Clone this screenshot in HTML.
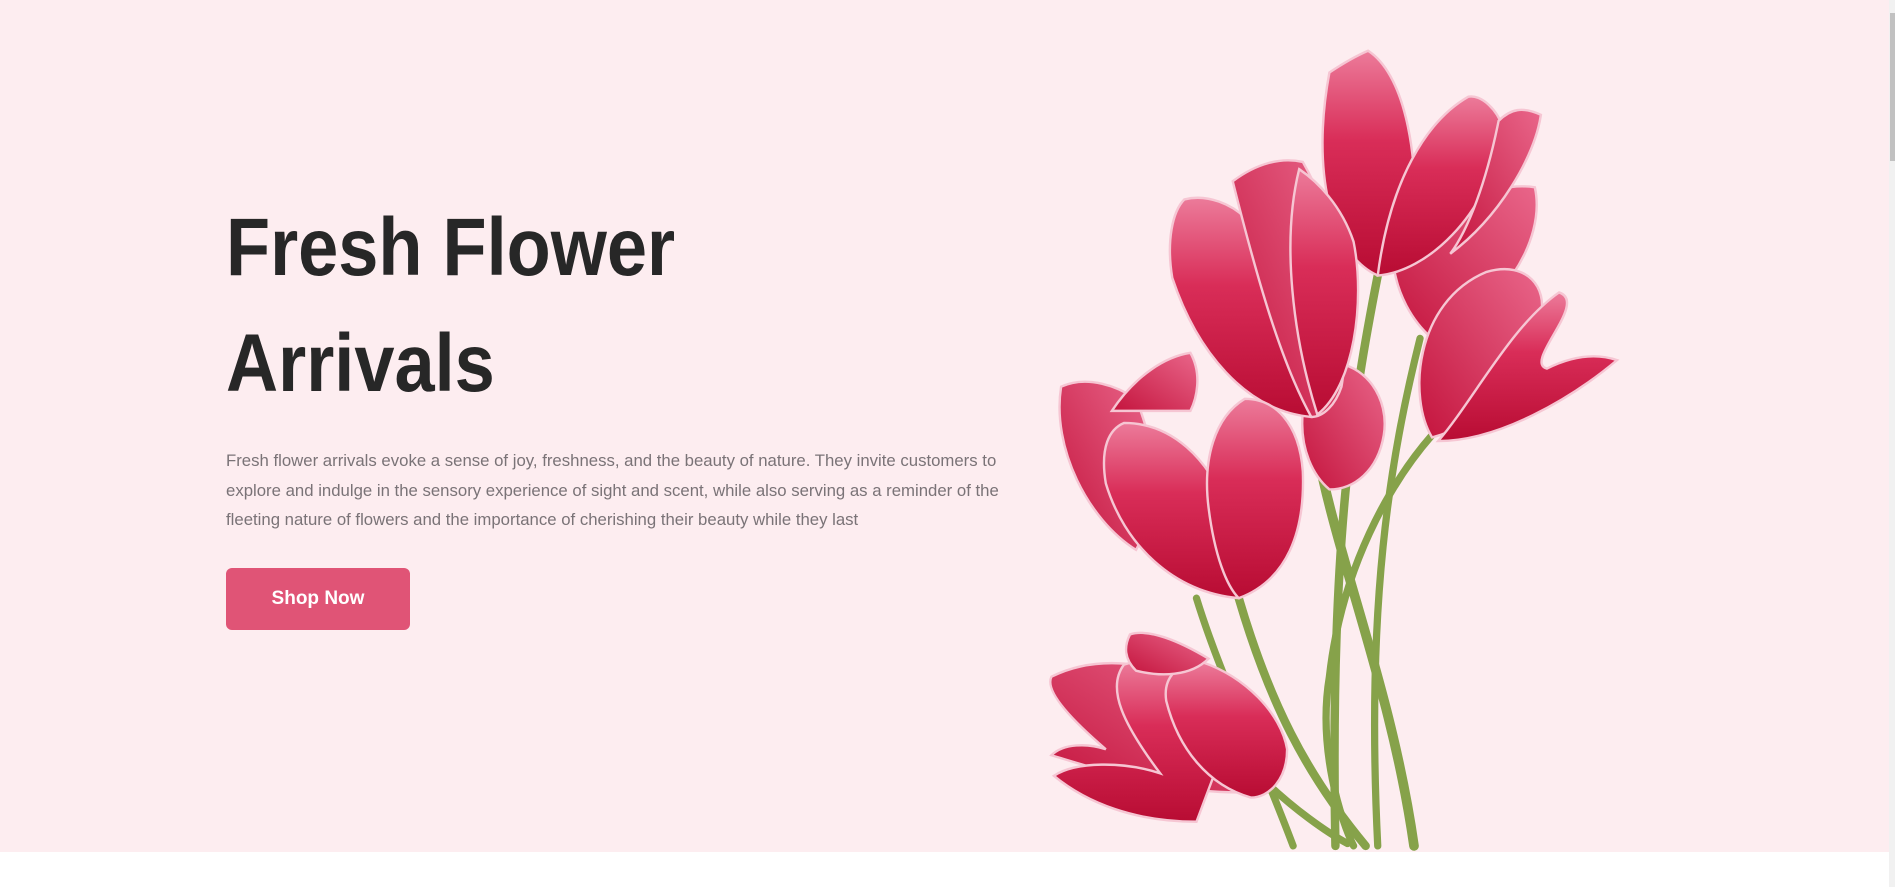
<!DOCTYPE html>
<html><head><meta charset="utf-8"><style>
html,body{margin:0;padding:0;width:1895px;height:887px;overflow:hidden;background:#fff;font-family:"Liberation Sans",sans-serif}
.hero{position:absolute;left:0;top:0;width:1889px;height:852px;background:#fdedf0}
.sb{position:absolute;left:1889px;top:0;width:6px;height:887px;background:#f1f1f1}
.th{position:absolute;left:1890px;top:13px;width:5px;height:148px;background:#c1c1c1}
h1{position:absolute;left:226px;top:190px;margin:0;font-size:82px;line-height:116px;color:#272727;font-weight:700}
h1 span{display:inline-block;transform:scaleX(0.88);transform-origin:left;white-space:nowrap}
p{position:absolute;left:226px;top:446px;margin:0;font-size:16.75px;line-height:29.6px;color:#7a7377;white-space:nowrap}
.btn{position:absolute;left:226px;top:568px;width:184px;height:62px;background:#e05476;border-radius:6px;color:#fff;font-weight:700;font-size:19px;text-align:center;line-height:62px}
svg{position:absolute;left:0;top:0}
</style></head><body>
<div class="hero"></div>
<div class="sb"></div><div class="th"></div>
<h1><span>Fresh Flower</span><br><span>Arrivals</span></h1>
<p>Fresh flower arrivals evoke a sense of joy, freshness, and the beauty of nature. They invite customers to<br>explore and indulge in the sensory experience of sight and scent, while also serving as a reminder of the<br>fleeting nature of flowers and the importance of cherishing their beauty while they last</p>
<div class="btn">Shop Now</div>
<svg width="1895" height="887" viewBox="0 0 1568 734" preserveAspectRatio="none">
<defs>
<linearGradient id="g" x1="0" y1="1" x2="0" y2="0"><stop offset="0" stop-color="#b80c33"/><stop offset="0.6" stop-color="#d92d58"/><stop offset="1" stop-color="#ec7b9a"/></linearGradient>
<linearGradient id="g2" x1="0" y1="1" x2="1" y2="0"><stop offset="0" stop-color="#c4143d"/><stop offset="1" stop-color="#e9668a"/></linearGradient>
</defs>
<g fill="none" stroke="#86a24a" stroke-linecap="round">
<path d="M1140 228 C1120 330 1100 450 1105 700" stroke-width="7"/>
<path d="M1085 345 C1100 450 1150 560 1170 700" stroke-width="8"/>
<path d="M1175 280 C1150 380 1130 500 1140 700" stroke-width="6"/>
<path d="M1185 360 C1150 400 1110 470 1100 560 C1090 620 1110 680 1120 700" stroke-width="6"/>
<path d="M1025 495 C1050 580 1080 640 1130 700" stroke-width="7"/>
<path d="M990 495 C1010 560 1040 620 1070 700" stroke-width="6"/>
<path d="M1040 640 C1070 670 1100 690 1115 698" stroke-width="6"/>
</g>
<g stroke="#f6c6d3" stroke-width="2">
<path d="M1185 280 C1150 250 1140 190 1170 160 C1210 170 1240 150 1270 155 C1280 200 1240 260 1185 280Z" fill="url(#g2)"/>
<path d="M1140 228 C1100 210 1085 140 1100 60 C1115 50 1125 45 1132 42 C1160 60 1175 120 1170 200Z" fill="url(#g)"/>
<path d="M1140 228 C1180 225 1230 180 1245 110 C1240 90 1225 78 1215 80 C1180 100 1150 150 1140 228Z" fill="url(#g)"/>
<path d="M1200 210 C1240 180 1270 130 1275 95 C1260 88 1250 90 1240 100 C1230 150 1215 190 1200 210Z" fill="url(#g2)"/>
<path d="M1185 362 C1165 330 1170 250 1230 225 C1265 215 1280 240 1275 260 C1260 310 1230 350 1185 362Z" fill="url(#g2)"/>
<path d="M1190 365 C1240 365 1300 330 1338 298 C1320 292 1300 295 1280 305 C1260 300 1315 250 1290 242 C1250 270 1220 330 1190 365Z" fill="url(#g)"/>
<path d="M1100 405 C1070 380 1070 320 1100 300 C1130 300 1150 330 1145 360 C1140 390 1120 405 1100 405Z" fill="url(#g2)"/>
<path d="M1085 345 C1030 340 990 290 970 230 C965 200 970 175 980 165 C1000 160 1020 170 1030 180 C1060 230 1080 290 1085 345Z" fill="url(#g)"/>
<path d="M1085 345 C1060 300 1040 230 1020 150 C1040 135 1060 130 1078 134 C1110 190 1120 260 1110 320 C1105 335 1095 345 1085 345Z" fill="url(#g2)"/>
<path d="M1090 343 C1120 320 1130 250 1120 200 C1110 170 1090 150 1075 140 C1060 200 1070 280 1090 343Z" fill="url(#g)"/>
<path d="M940 455 C900 430 870 370 878 320 C900 310 925 320 940 330 C960 380 960 420 940 455Z" fill="url(#g2)"/>
<path d="M920 340 C940 310 965 295 985 292 C995 310 990 330 985 340Z" fill="url(#g2)"/>
<path d="M1025 495 C970 490 930 450 915 400 C910 370 918 355 930 350 C970 350 1000 380 1015 420 C1025 450 1028 475 1025 495Z" fill="url(#g)"/>
<path d="M1025 495 C1065 480 1080 440 1078 390 C1075 350 1055 330 1030 330 C1005 345 995 380 1000 420 C1005 460 1015 485 1025 495Z" fill="url(#g)"/>
<path d="M1045 655 C980 660 920 640 870 625 C880 615 900 615 915 620 C880 590 865 570 870 560 C900 545 940 545 970 560Z" fill="url(#g2)"/>
<path d="M990 680 C940 680 900 665 872 642 C890 630 930 630 960 640 C930 600 915 570 930 550 C960 540 995 560 1020 600Z" fill="url(#g)"/>
<path d="M1035 660 C1000 650 975 620 965 580 C962 560 975 548 995 548 C1030 560 1060 590 1065 620 C1065 645 1050 660 1035 660Z" fill="url(#g)"/>
<path d="M935 525 C950 520 975 530 1000 545 C985 560 960 560 940 555 C930 545 930 535 935 525Z" fill="url(#g2)"/>
</g>
</svg>
</body></html>
